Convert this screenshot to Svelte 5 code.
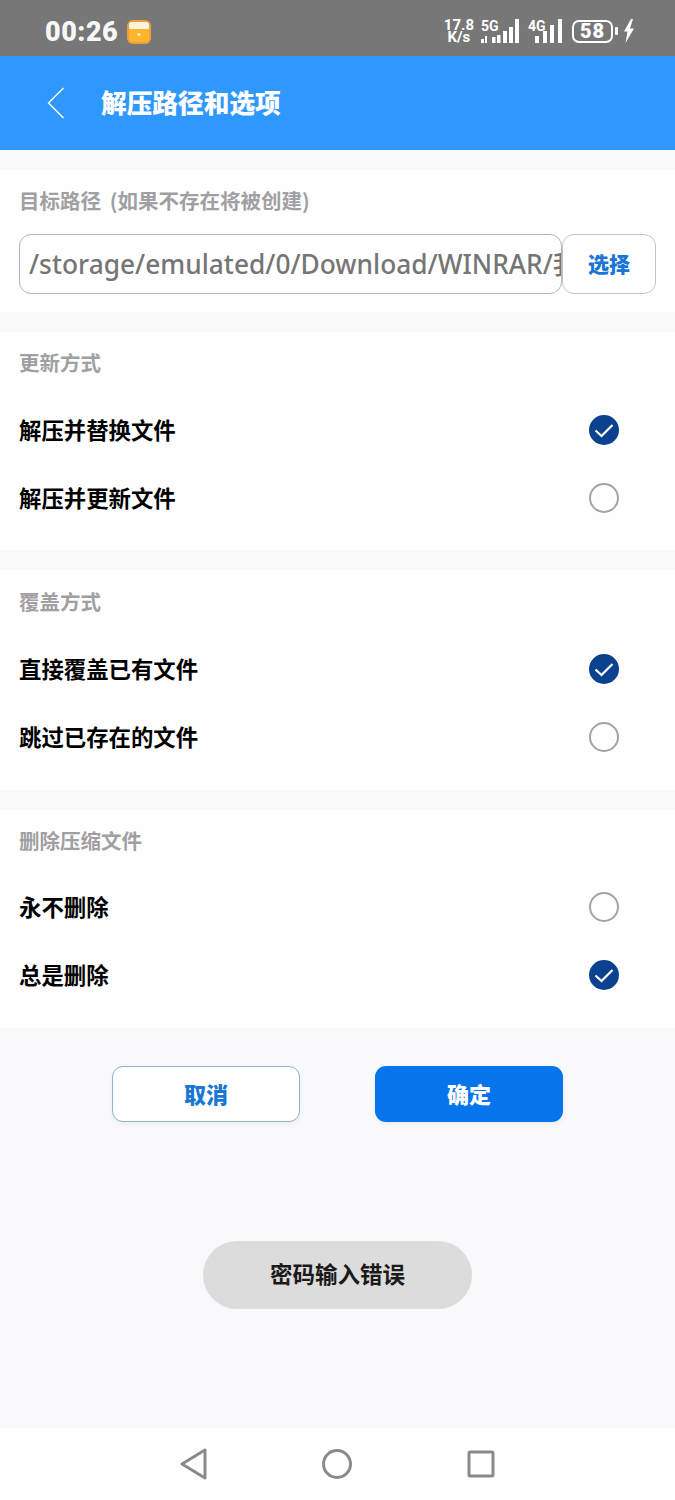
<script lang="ts">
	const groups = [
		{
			title: '更新方式',
			options: [
				{ label: '解压并替换文件', checked: true },
				{ label: '解压并更新文件', checked: false }
			]
		},
		{
			title: '覆盖方式',
			options: [
				{ label: '直接覆盖已有文件', checked: true },
				{ label: '跳过已存在的文件', checked: false }
			]
		},
		{
			title: '删除压缩文件',
			options: [
				{ label: '永不删除', checked: false },
				{ label: '总是删除', checked: true }
			]
		}
	];
</script>

<div class="page">
	<div class="status">
		<span class="time">00:26</span>
		<svg class="cal" width="24" height="24" viewBox="0 0 24 24">
			<rect width="24" height="24" rx="6" fill="#e8a13c" />
			<rect x="2" y="2" width="20" height="8" rx="3" fill="#fdf1dc" />
			<rect x="2" y="9" width="20" height="13" rx="3" fill="#fdb52c" />
			<circle cx="12" cy="14.500" r="1.500" fill="#fff3d0" />
		</svg>
		<div class="indicators">
			<div class="speed"><span>17.8</span><span>K/s</span></div>
			<div class="net five">
				<div class="net-tag">
					<span>5G</span>
					<svg width="7" height="7" viewBox="0 0 7 7" fill="#fff">
						<rect x="0" y="3" width="3" height="4" /><rect x="4" y="0" width="2" height="7" />
					</svg>
				</div>
				<svg class="bars" width="31" height="24" viewBox="0 0 31 24" fill="#fff">
					<rect x="4" y="18" width="3.500" height="6" /><rect x="9" y="16" width="3.500" height="8" /><rect x="15" y="12" width="4" height="12" /><rect x="21" y="8" width="4" height="16" /><rect x="27" y="0" width="4" height="24" />
				</svg>
			</div>
			<div class="net four">
				<div class="net-tag"><span>4G</span></div>
				<svg class="bars" width="27" height="24" viewBox="0 0 27 24" fill="#fff">
					<rect x="0" y="17" width="4" height="7" /><rect x="8" y="12" width="4" height="12" /><rect x="15" y="6" width="4" height="18" /><rect x="23" y="0" width="4" height="24" />
				</svg>
			</div>
			<div class="battery">58</div>
			<span class="nub"></span>
			<svg width="10" height="24" viewBox="0 0 10 24" fill="#fff">
				<path d="M7 0 0 12.500h3.500L1.500 24 10 9.500H6L9 0z" />
			</svg>
		</div>
	</div>

	<header class="bar">
		<svg class="back" width="18" height="32" viewBox="0 0 18 32" fill="none" stroke="#fff" stroke-width="1.400">
			<path d="M16.500 1 1.500 16l15 15" />
		</svg>
		<h1>解压路径和选项</h1>
	</header>

	<section class="path-card">
		<div class="caption">目标路径 (如果不存在将被创建)</div>
		<div class="path-row">
			<div class="path-input">/storage/emulated/0/Download/WINRAR/我的文件</div>
			<button class="pick">选择</button>
		</div>
	</section>

	{#each groups as group}
		<section class="card">
			<div class="caption">{group.title}</div>
			{#each group.options as option}
				<div class="row">
					<span>{option.label}</span>
					{#if option.checked}
						<svg width="30" height="30" viewBox="0 0 30 30">
							<circle cx="15" cy="15" r="15" fill="#0b428f" />
							<path d="M6.500 15.500l6 5.500L23.500 10" fill="none" stroke="#fff" stroke-width="2.200" />
						</svg>
					{:else}
						<svg width="30" height="30" viewBox="0 0 30 30">
							<circle cx="15" cy="15" r="14" fill="none" stroke="#a3a3a5" stroke-width="2" />
						</svg>
					{/if}
				</div>
			{/each}
		</section>
	{/each}

	<div class="actions">
		<button class="cancel">取消</button>
		<button class="ok">确定</button>
	</div>

	<div class="toast">密码输入错误</div>

	<nav class="nav">
		<svg width="28" height="32" viewBox="0 0 28 32" fill="none" stroke="#8a8a8a" stroke-width="3" stroke-linejoin="round">
			<path d="M25 2 2 16l23 14z" />
		</svg>
		<svg width="32" height="32" viewBox="0 0 32 32" fill="none" stroke="#8a8a8a" stroke-width="3">
			<circle cx="16" cy="16" r="13.500" />
		</svg>
		<svg width="30" height="30" viewBox="0 0 30 30" fill="none" stroke="#8a8a8a" stroke-width="3" stroke-linejoin="round">
			<rect x="3" y="3" width="24" height="24" rx="1" />
		</svg>
	</nav>
</div>

<style>
	:global(body) {
		background: #f9f9fb;
	}

	.page {
		position: relative;
		display: flex;
		flex-direction: column;
		height: 1500px;
		overflow: hidden;
		background: #f9f9fb;
		font-family: 'Noto Sans CJK SC', 'Noto Sans', sans-serif;
	}

	.status {
		display: flex;
		align-items: center;
		height: 56px;
		padding: 7px 41px 0 45px;
		box-sizing: border-box;
		background: #777;
		color: #fff;
	}

	.time {
		font-family: Roboto, sans-serif;
		font-size: 27px;
		font-weight: 900;
		letter-spacing: 0.5px;
		color: #f7f7f7;
	}

	.cal {
		margin-left: 9px;
	}

	.indicators {
		display: flex;
		align-items: center;
		margin-left: auto;
		margin-top: -1px;
	}

	.speed {
		display: flex;
		flex-direction: column;
		align-items: center;
		font-family: Roboto, sans-serif;
		font-size: 15px;
		font-weight: 700;
		line-height: 12px;
	}

	.net {
		position: relative;
		display: flex;
		height: 24px;
	}

	.five {
		margin-left: 7px;
	}

	.four {
		margin-left: 9px;
	}

	.net-tag {
		display: flex;
		flex-direction: column;
		justify-content: space-between;
		width: 7px;
		height: 24px;
		font-family: Roboto, sans-serif;
		font-size: 14px;
		font-weight: 700;
		line-height: 14px;
		white-space: nowrap;
	}

	.battery {
		display: flex;
		align-items: center;
		justify-content: center;
		width: 41px;
		height: 23px;
		box-sizing: border-box;
		margin-left: 10px;
		border: 2px solid #fff;
		border-radius: 7px;
		font-family: Roboto, sans-serif;
		font-size: 20px;
		font-weight: 900;
		letter-spacing: 1px;
		line-height: 1;
	}

	.nub {
		width: 3px;
		height: 8px;
		margin: 0 6px 0 2px;
		background: #fff;
		border-radius: 1px;
	}

	.bar {
		display: flex;
		align-items: center;
		gap: 36px;
		height: 94px;
		padding-left: 47px;
		box-sizing: border-box;
		background: #2f98ff;
	}

	.bar h1 {
		margin: -3px 0 0;
		font-size: 25.700px;
		font-weight: 900;
		color: #fff;
	}

	.path-card {
		margin-top: 20px;
		height: 142px;
		padding: 0 19px;
		box-sizing: border-box;
		background: #fefefe;
	}

	.caption {
		padding-top: 16px;
		font-size: 20.500px;
		line-height: 29px;
		font-weight: 700;
		word-spacing: 4px;
		color: #a0a0a3;
	}

	.path-row {
		display: flex;
		margin-top: 19px;
		height: 60px;
	}

	.path-input {
		width: 544px;
		box-sizing: border-box;
		padding-left: 9px;
		border: 1px solid #b4b4b6;
		border-radius: 12px;
		background: #fff;
		font-family: 'Noto Sans', 'Noto Sans CJK SC', sans-serif;
		font-size: 26.300px;
		font-weight: 500;
		line-height: 58px;
		color: #757575;
		white-space: nowrap;
		overflow: hidden;
	}

	.pick {
		width: 94px;
		border: 1px solid #c4c4c6;
		border-radius: 12px;
		background: #fff;
		font-family: inherit;
		font-size: 21px;
		font-weight: 900;
		color: #1976d6;
		padding: 0 0 2px;
	}

	.card {
		margin-top: 20px;
		height: 218px;
		padding: 0 19px;
		box-sizing: border-box;
		background: #fefefe;
	}

	.card .caption {
		margin-bottom: 19px;
	}

	.card:nth-of-type(3) {
		height: 220px;
	}

	.card:nth-of-type(3) .caption {
		padding-top: 17px;
	}

	.card:nth-of-type(4) .caption {
		margin-bottom: 18px;
		padding-top: 16px;
	}

	.row {
		display: flex;
		align-items: center;
		justify-content: space-between;
		height: 68px;
		padding-right: 37px;
		font-size: 22.400px;
		font-weight: 700;
		color: #000;
	}

	.row span {
		padding-bottom: 3px;
	}

	.actions {
		display: flex;
		justify-content: space-between;
		margin-top: 38px;
		padding: 0 112px;
	}

	.actions button {
		width: 188px;
		height: 56px;
		padding: 0 0 2px;
		border-radius: 11px;
		font-family: inherit;
		font-size: 22px;
		font-weight: 900;
		box-shadow: 0 2px 5px rgba(0, 0, 0, 0.06);
	}

	.cancel {
		border: 1px solid #8fb3cf;
		background: #fff;
		color: #1a78d2;
	}

	.ok {
		border: none;
		background: #0675ec;
		color: #fff;
	}

	.toast {
		position: absolute;
		left: 203px;
		top: 1241px;
		width: 269px;
		height: 68px;
		border-radius: 34px;
		background: #dcdcdc;
		font-size: 22.500px;
		font-weight: 700;
		line-height: 65px;
		text-align: center;
		color: #1a1a1a;
	}

	.nav {
		display: flex;
		align-items: center;
		justify-content: center;
		gap: 113px;
		margin-top: auto;
		height: 72px;
		background: #fefefe;
	}
</style>
